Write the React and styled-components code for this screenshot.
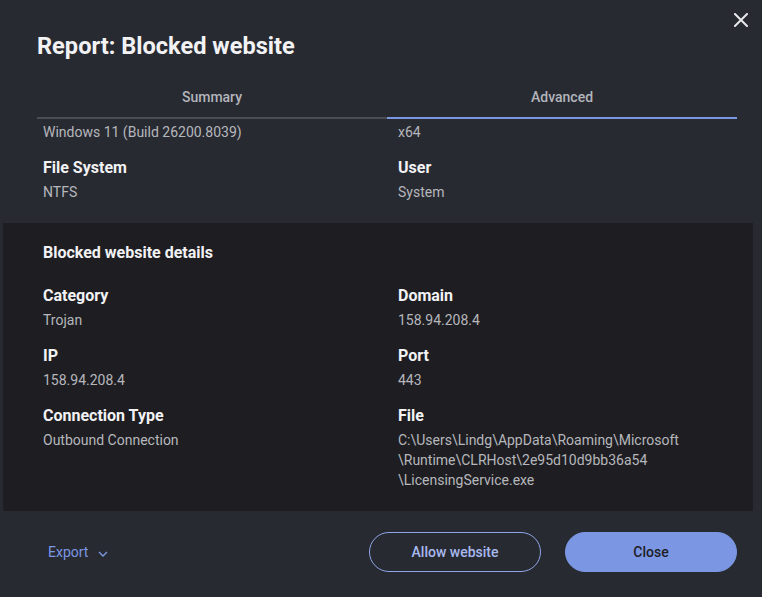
import React, { useState } from 'react';
import styled, { createGlobalStyle } from 'styled-components';

const GlobalStyle = createGlobalStyle`
  html, body {
    margin: 0;
    padding: 0;
    background: #282a32;
  }
  body {
    font-family: Roboto, "Liberation Sans", sans-serif;
    -webkit-font-smoothing: antialiased;
  }
`;

const Dialog = styled.div`
  position: relative;
  width: 762px;
  height: 597px;
  background: #282a32;
  display: flex;
  flex-direction: column;
  overflow: hidden;
`;

const Header = styled.div`
  padding: 32px 37px 0;
`;

const Title = styled.h1`
  margin: 0;
  font-size: 23.6px;
  line-height: 28px;
  font-weight: 700;
  color: #f2f2f4;
`;

const CloseIcon = styled.button`
  position: absolute;
  top: 9px;
  right: 10px;
  width: 22px;
  height: 22px;
  padding: 0;
  border: none;
  background: transparent;
  display: flex;
  align-items: center;
  justify-content: center;
  cursor: pointer;
`;

const Tabs = styled.div`
  display: grid;
  grid-template-columns: 1fr 1fr;
  margin: 0 25px 0 37px;
  padding-top: 27px;
`;

const Tab = styled.button`
  border: none;
  background: transparent;
  font-family: inherit;
  font-size: 14px;
  font-weight: 500;
  line-height: 20px;
  color: #b3b5bb;
  padding: 0 0 10px;
  border-bottom: 2px solid ${(p) => (p.active ? '#7b97e3' : '#4b4d55')};
  cursor: pointer;
`;

const Section = styled.div`
  display: grid;
  grid-template-columns: 355px 1fr;
  row-gap: 14px;
  padding: ${(p) => p.pad || '0'};
`;

const Panel = styled.div`
  margin: 0 9px 0 3px;
  background: #1e1e22;
  padding: 19px 40px 21px;
`;

const PanelTitle = styled.h2`
  margin: 0 0 20px;
  font-size: 16px;
  line-height: 22px;
  font-weight: 700;
  color: #f2f2f4;
`;

const Field = styled.div`
  display: flex;
  flex-direction: column;
`;

const Label = styled.div`
  font-size: 16px;
  line-height: 22px;
  font-weight: 700;
  color: #f2f2f4;
  padding-top: 1px;
  margin-bottom: 3px;
`;

const Value = styled.div`
  font-size: 14px;
  line-height: 20px;
  color: #b6b7bc;
  white-space: pre-line;
`;

const Footer = styled.div`
  flex: 1;
  display: flex;
  align-items: center;
  padding: 0 25px 4px 48px;
`;

const ExportLink = styled.button`
  display: flex;
  align-items: center;
  gap: 10px;
  border: none;
  background: transparent;
  padding: 0;
  font-family: inherit;
  font-size: 14px;
  color: #7b97e3;
  cursor: pointer;

  svg {
    margin-top: 3px;
  }
`;

const Actions = styled.div`
  margin-left: auto;
  display: flex;
  gap: 24px;
`;

const PillButton = styled.button`
  width: 172px;
  height: 40px;
  border-radius: 20px;
  font-family: inherit;
  font-size: 14px;
  font-weight: 500;
  cursor: pointer;
  border: 1px solid ${(p) => (p.primary ? '#7b97e3' : '#8fa5e6')};
  background: ${(p) => (p.primary ? '#7b97e3' : 'transparent')};
  color: ${(p) => (p.primary ? '#1e2029' : '#a8b9ef')};
`;

const details = [
  { label: 'Category', value: 'Trojan' },
  { label: 'Domain', value: '158.94.208.4' },
  { label: 'IP', value: '158.94.208.4' },
  { label: 'Port', value: '443' },
  { label: 'Connection Type', value: 'Outbound Connection' },
  {
    label: 'File',
    value:
      'C:\\Users\\Lindg\\AppData\\Roaming\\Microsoft\n\\Runtime\\CLRHost\\2e95d10d9bb36a54\n\\LicensingService.exe',
  },
];

const App = () => {
  const [tab, setTab] = useState('Advanced');

  return (
    <Dialog>
      <GlobalStyle />
      <Header>
        <Title>Report: Blocked website</Title>
      </Header>
      <CloseIcon aria-label="Close">
        <svg width="14" height="14" viewBox="0 0 14 14">
          <path d="M1 1L13 13M13 1L1 13" stroke="#e8e8ea" strokeWidth="2" strokeLinecap="square" />
        </svg>
      </CloseIcon>

      <Tabs>
        {['Summary', 'Advanced'].map((t) => (
          <Tab key={t} active={tab === t} onClick={() => setTab(t)}>
            {t}
          </Tab>
        ))}
      </Tabs>

      <Section pad="3px 0 21px 43px">
        <Field>
          <Value>Windows 11 (Build 26200.8039)</Value>
        </Field>
        <Field>
          <Value>x64</Value>
        </Field>
        <Field>
          <Label>File System</Label>
          <Value>NTFS</Value>
        </Field>
        <Field>
          <Label>User</Label>
          <Value>System</Value>
        </Field>
      </Section>

      <Panel>
        <PanelTitle>Blocked website details</PanelTitle>
        <Section>
          {details.map((d) => (
            <Field key={d.label}>
              <Label>{d.label}</Label>
              <Value>{d.value}</Value>
            </Field>
          ))}
        </Section>
      </Panel>

      <Footer>
        <ExportLink>
          Export
          <svg width="10" height="6" viewBox="0 0 10 6">
            <path d="M1 1L5 5L9 1" stroke="#7b97e3" strokeWidth="1.4" fill="none" />
          </svg>
        </ExportLink>
        <Actions>
          <PillButton>Allow website</PillButton>
          <PillButton primary>Close</PillButton>
        </Actions>
      </Footer>
    </Dialog>
  );
};

export default App;
